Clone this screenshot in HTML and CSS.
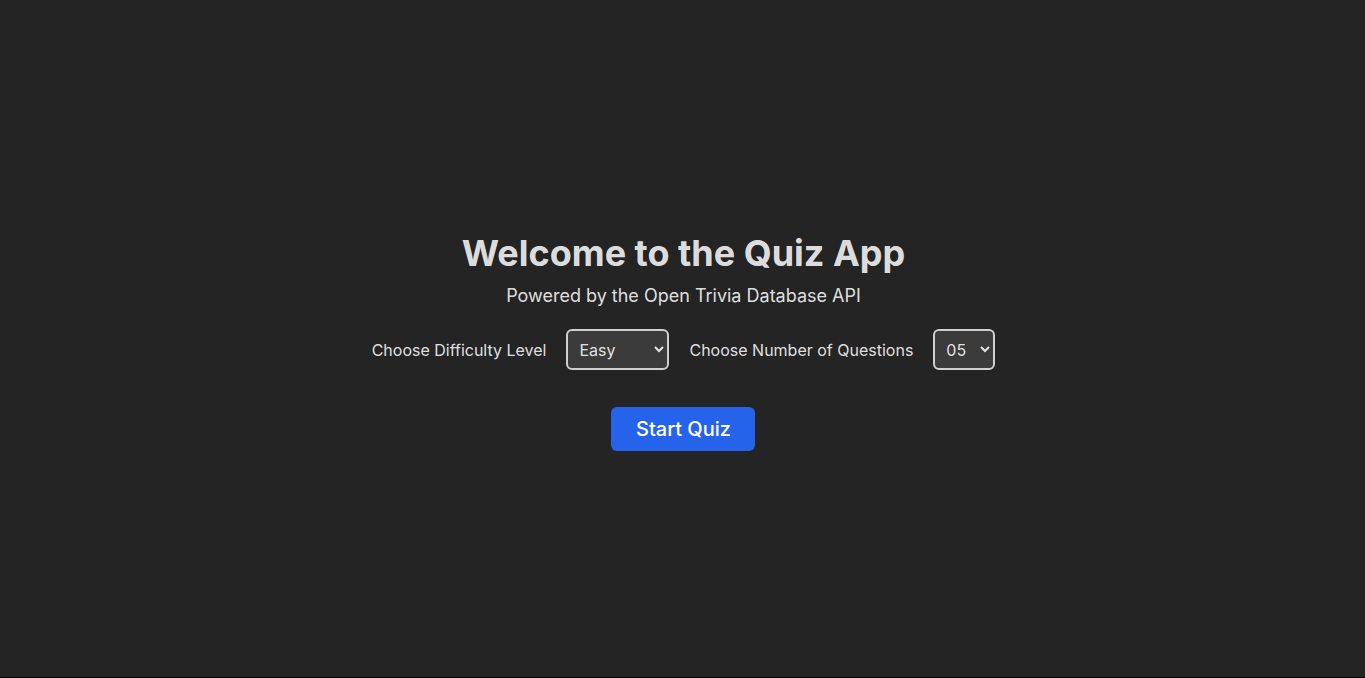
FILE: index.html
```html
<!DOCTYPE html>
<html lang="en">
<head>
<meta charset="utf-8">
<title>Quiz App</title>
<link rel="stylesheet" href="styles.css">
</head>
<body>
<main class="app">
  <section class="welcome">
    <h1 class="title">Welcome to the Quiz App</h1>
    <p class="subtitle">Powered by the Open Trivia Database API</p>
    <div class="options">
      <label class="label" for="difficulty">Choose Difficulty Level</label>
      <select id="difficulty" class="select select-wide">
        <option>Easy</option>
        <option>Medium</option>
        <option>Hard</option>
      </select>
      <label class="label" for="count">Choose Number of Questions</label>
      <select id="count" class="select select-narrow">
        <option>05</option>
        <option>10</option>
        <option>15</option>
      </select>
    </div>
    <button class="start" type="button">Start Quiz</button>
  </section>
</main>
</body>
</html>
```

FILE: styles.css
```css
html {
  background: #000;
  color-scheme: dark;
}
body {
  margin: 0;
  font-family: Inter, "Noto Sans", sans-serif;
  color: rgba(255, 255, 255, 0.87);
}
.app {
  height: 677px;
  background: #242424;
  display: flex;
  align-items: center;
  justify-content: center;
}
.welcome {
  display: flex;
  flex-direction: column;
  align-items: center;
  margin-top: 5px;
  padding-left: 2px;
}
.title {
  margin: 0;
  font-size: 36px;
  font-weight: 700;
  line-height: 44px;
}
.subtitle {
  margin: 8px 0 0;
  font-size: 18px;
  line-height: 26px;
}
.options {
  display: flex;
  align-items: center;
  gap: 20px;
  margin-top: 20px;
}
.label {
  font-size: 16px;
}
.select {
  color-scheme: dark;
  height: 41px;
  padding: 0 6px 0 7px;
  font-family: Inter, sans-serif;
  font-size: 16px;
  color: rgba(255, 255, 255, 0.87);
  background-color: #3b3b3b;
  border: 2px solid #cfcfcf;
  border-radius: 6px;
}
.select-wide {
  width: 103px;
}
.select-narrow {
  width: 62px;
}
.start {
  margin-top: 37px;
  width: 144px;
  height: 44px;
  border: none;
  border-radius: 6px;
  background: #2563eb;
  color: #fff;
  font-family: Inter, sans-serif;
  font-size: 20px;
  font-weight: 500;
  cursor: pointer;
}
```
